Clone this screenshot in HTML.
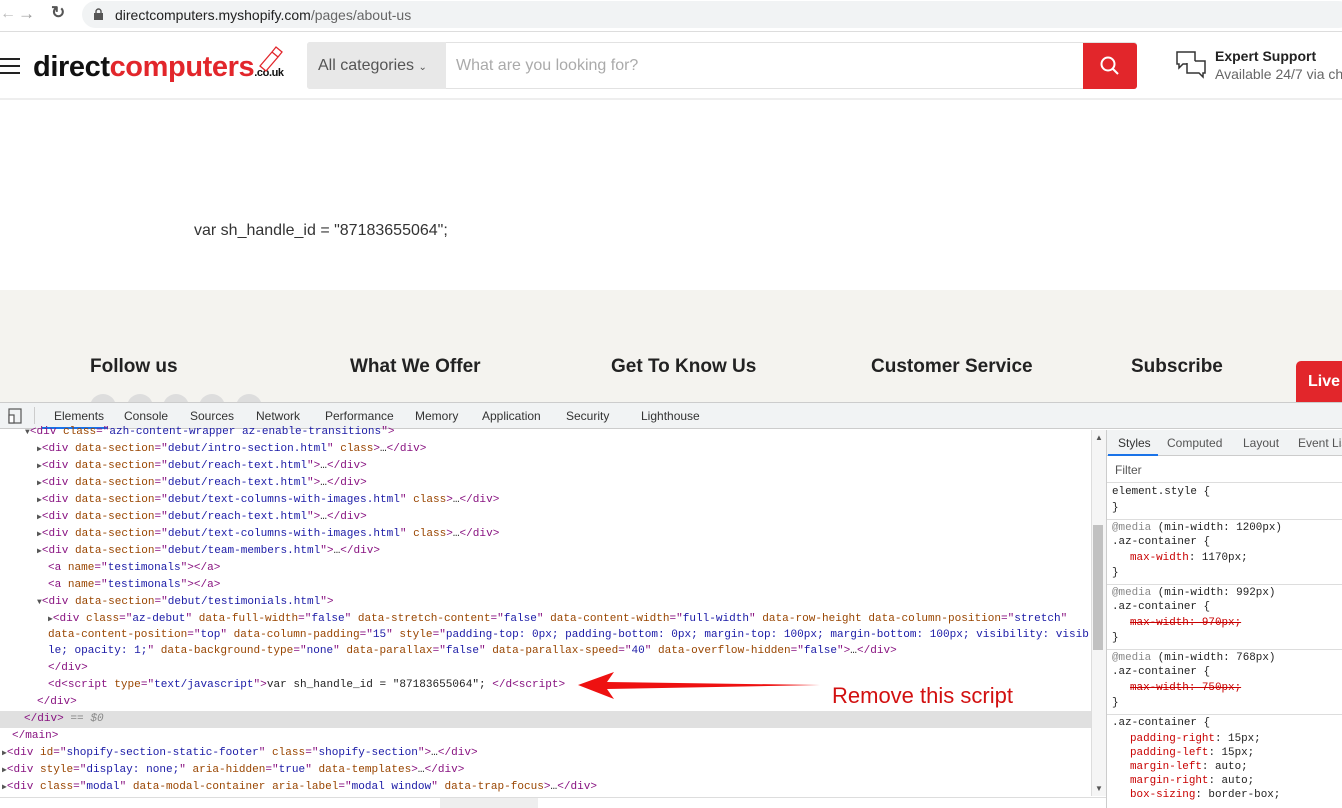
<!DOCTYPE html>
<html><head><meta charset="utf-8">
<style>
*{margin:0;padding:0;box-sizing:border-box}
body{width:1342px;height:808px;overflow:hidden;position:relative;background:#fff;font-family:"Liberation Sans",sans-serif}
.abs{position:absolute}
.code{position:absolute;font-family:"Liberation Mono","DejaVu Sans Mono",monospace;font-size:11.05px;white-space:pre;color:#222;line-height:14px}
.t{color:#881280}.a{color:#994500}.v{color:#1a1aa6}.g{color:#888}
.tri{color:#555;font-size:8px}
.tab{position:absolute;top:409px;font-size:12px;color:#333}
.st{position:absolute;font-family:"Liberation Mono",monospace;font-size:10.9px;white-space:pre;color:#222}
.p{color:#c80000}
.s{color:#c80000;text-decoration:line-through}
.m{color:#888}
.sep{position:absolute;left:1107px;width:235px;height:1px;background:#ddd}
.fh{position:absolute;top:356px;font-size:19px;font-weight:bold;color:#222}
.circ{position:absolute;top:394px;width:26px;height:26px;border-radius:50%;background:#ddd}
</style></head><body>

<div class="abs" style="left:0;top:0;width:1342px;height:30px;background:#fff"></div>
<div class="abs" style="left:82px;top:1px;width:1270px;height:27px;border-radius:14px;background:#f1f3f4"></div>
<div class="abs" style="left:0;top:5px;font-size:16px;color:#bbb">←</div>
<div class="abs" style="left:18px;top:4px;font-size:17px;color:#999">→</div>
<div class="abs" style="left:51px;top:3px;font-size:17px;color:#555;font-weight:bold">↻</div>
<svg class="abs" style="left:94px;top:8px" width="9" height="12"><rect x="0" y="5" width="9" height="7" fill="#555"/><path d="M2 5V3.5a2.5 2.5 0 0 1 5 0V5" stroke="#555" fill="none" stroke-width="1.4"/></svg>
<div class="abs" style="left:115px;top:7px;font-size:14px;color:#222">directcomputers.myshopify.com<span style="color:#666">/pages/about-us</span></div>
<div class="abs" style="left:0;top:31px;width:1342px;height:1px;background:#ddd"></div>

<svg class="abs" style="left:0;top:57px" width="22" height="18"><path d="M0 2h20M0 9h20M0 16h20" stroke="#222" stroke-width="2"/></svg>
<div class="abs" style="left:33px;top:51px;font-size:29px;font-weight:bold;letter-spacing:-0.4px;color:#111">direct<span style="color:#e2262b">computers</span><span style="font-size:11px;color:#111">.co.uk</span></div>
<svg class="abs" style="left:256px;top:44px" width="28" height="28"><path d="M4 22l12-14 6 5-12 14z M16 8l4-5 6 5-4 5" fill="none" stroke="#e2262b" stroke-width="1.3"/></svg>
<div class="abs" style="left:307px;top:42px;width:830px;height:47px;border-radius:3px;background:#fff;border:1px solid #e2e2e2"></div>
<div class="abs" style="left:307px;top:42px;width:139px;height:47px;background:#e8e8e8;border-radius:3px 0 0 3px"></div>
<div class="abs" style="left:318px;top:57px;font-size:16px;color:#555">All categories <span style="font-size:10px">⌄</span></div>
<div class="abs" style="left:456px;top:57px;font-size:16px;color:#aaa">What are you looking for?</div>
<div class="abs" style="left:1083px;top:43px;width:54px;height:46px;background:#e2262b;border-radius:0 3px 3px 0"></div>
<svg class="abs" style="left:1099px;top:55px" width="22" height="22"><circle cx="9" cy="9" r="6.5" stroke="#fff" stroke-width="2" fill="none"/><path d="M14 14l5 5" stroke="#fff" stroke-width="2"/></svg>
<svg class="abs" style="left:1175px;top:50px" width="32" height="30"><path d="M2 2h18v12H8l-4 4v-4H2z" fill="none" stroke="#333" stroke-width="1.5"/><path d="M12 13v10h12l4 4v-4h2V11h-10" fill="#fff" stroke="#333" stroke-width="1.5"/></svg>
<div class="abs" style="left:1215px;top:48px;font-size:14px;font-weight:bold;color:#222">Expert Support</div>
<div class="abs" style="left:1215px;top:66px;font-size:14px;color:#666;white-space:nowrap">Available 24/7 via chat</div>
<div class="abs" style="left:0;top:98px;width:1342px;height:2px;background:#eee"></div>

<div class="abs" style="left:194px;top:222px;font-size:16px;color:#333">var sh_handle_id = "87183655064";</div>

<div class="abs" style="left:0;top:290px;width:1342px;height:112px;background:#f4f3ef"></div>
<div class="fh" style="left:90px">Follow us</div>
<div class="fh" style="left:350px">What We Offer</div>
<div class="fh" style="left:611px">Get To Know Us</div>
<div class="fh" style="left:871px">Customer Service</div>
<div class="fh" style="left:1131px">Subscribe</div>
<div class="circ" style="left:90px"></div><div class="circ" style="left:127px"></div><div class="circ" style="left:163px"></div><div class="circ" style="left:199px"></div><div class="circ" style="left:236px"></div>
<div class="abs" style="left:1296px;top:361px;width:60px;height:41px;background:#e2262b;border-radius:5px 0 0 0;color:#fff;font-size:16px;font-weight:bold;padding:12px 0 0 12px">Live</div>

<div class="abs" style="left:0;top:402px;width:1342px;height:27px;background:#f1f3f4;border-top:1px solid #ccc;border-bottom:1px solid #ccc"></div>
<svg class="abs" style="left:7px;top:407px" width="18" height="18"><rect x="2" y="2" width="12" height="14" fill="none" stroke="#555" stroke-width="1.2"/><rect x="2" y="8" width="5" height="8" fill="#fff" stroke="#555" stroke-width="1.2"/></svg>
<div class="abs" style="left:34px;top:407px;width:1px;height:17px;background:#ccc"></div>
<div class="tab" style="left:54px">Elements</div>
<div class="abs" style="left:42px;top:427px;width:66px;height:2px;background:#1a73e8"></div>
<div class="tab" style="left:124px">Console</div>
<div class="tab" style="left:190px">Sources</div>
<div class="tab" style="left:256px">Network</div>
<div class="tab" style="left:325px">Performance</div>
<div class="tab" style="left:415px">Memory</div>
<div class="tab" style="left:482px">Application</div>
<div class="tab" style="left:566px">Security</div>
<div class="tab" style="left:641px">Lighthouse</div>

<div class="abs" style="left:0;top:711px;width:1091px;height:17px;background:#e0e0e0"></div>
<div class="abs" style="left:1091px;top:430px;width:15px;height:366px;background:#f5f5f5;border-left:1px solid #ddd"></div>
<div class="abs" style="left:1093px;top:525px;width:10px;height:125px;background:#c1c1c1"></div>
<div class="abs" style="left:1095px;top:433px;font-size:8px;color:#555">▲</div>
<div class="abs" style="left:1095px;top:784px;font-size:8px;color:#555">▼</div>
<div class="abs" style="left:0;top:797px;width:1107px;height:11px;background:#fff;border-top:1px solid #ddd"></div>
<div class="abs" style="left:440px;top:798px;width:98px;height:10px;background:#eee"></div>

<div class="code" style="left:25px;top:425px"><span class="tri">▼</span><span class="t">&lt;div </span><span class="a">class</span><span class="t">="</span><span class="v">azh-content-wrapper az-enable-transitions</span><span class="t">"&gt;</span></div>
<div class="code" style="left:37px;top:442px"><span class="tri">▶</span><span class="t">&lt;div </span><span class="a">data-section</span><span class="t">="</span><span class="v">debut/intro-section.html</span><span class="t">" </span><span class="a">class</span><span class="t">&gt;</span>…<span class="t">&lt;/div&gt;</span></div>
<div class="code" style="left:37px;top:459px"><span class="tri">▶</span><span class="t">&lt;div </span><span class="a">data-section</span><span class="t">="</span><span class="v">debut/reach-text.html</span><span class="t">"&gt;</span>…<span class="t">&lt;/div&gt;</span></div>
<div class="code" style="left:37px;top:476px"><span class="tri">▶</span><span class="t">&lt;div </span><span class="a">data-section</span><span class="t">="</span><span class="v">debut/reach-text.html</span><span class="t">"&gt;</span>…<span class="t">&lt;/div&gt;</span></div>
<div class="code" style="left:37px;top:493px"><span class="tri">▶</span><span class="t">&lt;div </span><span class="a">data-section</span><span class="t">="</span><span class="v">debut/text-columns-with-images.html</span><span class="t">" </span><span class="a">class</span><span class="t">&gt;</span>…<span class="t">&lt;/div&gt;</span></div>
<div class="code" style="left:37px;top:510px"><span class="tri">▶</span><span class="t">&lt;div </span><span class="a">data-section</span><span class="t">="</span><span class="v">debut/reach-text.html</span><span class="t">"&gt;</span>…<span class="t">&lt;/div&gt;</span></div>
<div class="code" style="left:37px;top:527px"><span class="tri">▶</span><span class="t">&lt;div </span><span class="a">data-section</span><span class="t">="</span><span class="v">debut/text-columns-with-images.html</span><span class="t">" </span><span class="a">class</span><span class="t">&gt;</span>…<span class="t">&lt;/div&gt;</span></div>
<div class="code" style="left:37px;top:544px"><span class="tri">▶</span><span class="t">&lt;div </span><span class="a">data-section</span><span class="t">="</span><span class="v">debut/team-members.html</span><span class="t">"&gt;</span>…<span class="t">&lt;/div&gt;</span></div>
<div class="code" style="left:48px;top:561px"><span class="t">&lt;a </span><span class="a">name</span><span class="t">="</span><span class="v">testimonals</span><span class="t">"&gt;&lt;/a&gt;</span></div>
<div class="code" style="left:48px;top:578px"><span class="t">&lt;a </span><span class="a">name</span><span class="t">="</span><span class="v">testimonals</span><span class="t">"&gt;&lt;/a&gt;</span></div>
<div class="code" style="left:37px;top:595px"><span class="tri">▼</span><span class="t">&lt;div </span><span class="a">data-section</span><span class="t">="</span><span class="v">debut/testimonials.html</span><span class="t">"&gt;</span></div>
<div class="code" style="left:48px;top:612px"><span class="tri">▶</span><span class="t">&lt;div </span><span class="a">class</span><span class="t">="</span><span class="v">az-debut</span><span class="t">" </span><span class="a">data-full-width</span><span class="t">="</span><span class="v">false</span><span class="t">" </span><span class="a">data-stretch-content</span><span class="t">="</span><span class="v">false</span><span class="t">" </span><span class="a">data-content-width</span><span class="t">="</span><span class="v">full-width</span><span class="t">" </span><span class="a">data-row-height</span> <span class="a">data-column-position</span><span class="t">="</span><span class="v">stretch</span><span class="t">"</span></div>
<div class="code" style="left:48px;top:628px"><span class="a">data-content-position</span><span class="t">="</span><span class="v">top</span><span class="t">" </span><span class="a">data-column-padding</span><span class="t">="</span><span class="v">15</span><span class="t">" </span><span class="a">style</span><span class="t">="</span><span class="v">padding-top: 0px; padding-bottom: 0px; margin-top: 100px; margin-bottom: 100px; visibility: visib</span></div>
<div class="code" style="left:48px;top:644px"><span class="v">le; opacity: 1;</span><span class="t">" </span><span class="a">data-background-type</span><span class="t">="</span><span class="v">none</span><span class="t">" </span><span class="a">data-parallax</span><span class="t">="</span><span class="v">false</span><span class="t">" </span><span class="a">data-parallax-speed</span><span class="t">="</span><span class="v">40</span><span class="t">" </span><span class="a">data-overflow-hidden</span><span class="t">="</span><span class="v">false</span><span class="t">"&gt;</span>…<span class="t">&lt;/div&gt;</span></div>
<div class="code" style="left:48px;top:661px"><span class="t">&lt;/div&gt;</span></div>
<div class="code" style="left:48px;top:678px"><span class="t">&lt;d&lt;script </span><span class="a">type</span><span class="t">="</span><span class="v">text/javascript</span><span class="t">"&gt;</span>var sh_handle_id = "87183655064"; <span class="t">&lt;/d&lt;script&gt;</span></div>
<div class="code" style="left:37px;top:695px"><span class="t">&lt;/div&gt;</span></div>
<div class="code" style="left:24px;top:712px"><span class="t">&lt;/div&gt;</span> <span class="g">== <i>$0</i></span></div>
<div class="code" style="left:12px;top:729px"><span class="t">&lt;/main&gt;</span></div>
<div class="code" style="left:2px;top:746px"><span class="tri">▶</span><span class="t">&lt;div </span><span class="a">id</span><span class="t">="</span><span class="v">shopify-section-static-footer</span><span class="t">" </span><span class="a">class</span><span class="t">="</span><span class="v">shopify-section</span><span class="t">"&gt;</span>…<span class="t">&lt;/div&gt;</span></div>
<div class="code" style="left:2px;top:763px"><span class="tri">▶</span><span class="t">&lt;div </span><span class="a">style</span><span class="t">="</span><span class="v">display: none;</span><span class="t">" </span><span class="a">aria-hidden</span><span class="t">="</span><span class="v">true</span><span class="t">" </span><span class="a">data-templates</span><span class="t">&gt;</span>…<span class="t">&lt;/div&gt;</span></div>
<div class="code" style="left:2px;top:780px"><span class="tri">▶</span><span class="t">&lt;div </span><span class="a">class</span><span class="t">="</span><span class="v">modal</span><span class="t">" </span><span class="a">data-modal-container</span> <span class="a">aria-label</span><span class="t">="</span><span class="v">modal window</span><span class="t">" </span><span class="a">data-trap-focus</span><span class="t">&gt;</span>…<span class="t">&lt;/div&gt;</span></div>

<svg class="abs" style="left:570px;top:668px" width="260" height="36"><path d="M8 17 L44 4 L37 14 L250 17 L37 21 L44 31 Z" fill="#ee1111"/></svg>
<div class="abs" style="left:832px;top:683px;font-size:22px;color:#d21010">Remove this script</div>

<div class="abs" style="left:1106px;top:430px;width:1px;height:378px;background:#ccc"></div>
<div class="abs" style="left:1107px;top:430px;width:235px;height:26px;background:#f1f3f4;border-bottom:1px solid #ccc"></div>
<div class="abs" style="left:1118px;top:436px;font-size:12px;color:#333">Styles</div>
<div class="abs" style="left:1167px;top:436px;font-size:12px;color:#555">Computed</div>
<div class="abs" style="left:1243px;top:436px;font-size:12px;color:#555">Layout</div>
<div class="abs" style="left:1298px;top:436px;font-size:12px;color:#555;white-space:nowrap">Event Listeners</div>
<div class="abs" style="left:1108px;top:454px;width:50px;height:2px;background:#1a73e8"></div>
<div class="abs" style="left:1115px;top:463px;font-size:12px;color:#555">Filter</div>
<div class="sep" style="top:482px"></div>
<div class="st" style="left:1112px;top:486px">element.style {</div>
<div class="st" style="left:1112px;top:502px">}</div>
<div class="sep" style="top:519px"></div>
<div class="st" style="left:1112px;top:522px"><span class="m">@media</span> (min-width: 1200px)</div>
<div class="st" style="left:1112px;top:536px">.az-container {</div>
<div class="st" style="left:1130px;top:552px"><span class="p">max-width</span>: 1170px;</div>
<div class="st" style="left:1112px;top:567px">}</div>
<div class="sep" style="top:584px"></div>
<div class="st" style="left:1112px;top:587px"><span class="m">@media</span> (min-width: 992px)</div>
<div class="st" style="left:1112px;top:601px">.az-container {</div>
<div class="st" style="left:1130px;top:617px"><span class="s">max-width: 970px;</span></div>
<div class="st" style="left:1112px;top:632px">}</div>
<div class="sep" style="top:649px"></div>
<div class="st" style="left:1112px;top:652px"><span class="m">@media</span> (min-width: 768px)</div>
<div class="st" style="left:1112px;top:666px">.az-container {</div>
<div class="st" style="left:1130px;top:682px"><span class="s">max-width: 750px;</span></div>
<div class="st" style="left:1112px;top:697px">}</div>
<div class="sep" style="top:714px"></div>
<div class="st" style="left:1112px;top:717px">.az-container {</div>
<div class="st" style="left:1130px;top:733px"><span class="p">padding-right</span>: 15px;</div>
<div class="st" style="left:1130px;top:747px"><span class="p">padding-left</span>: 15px;</div>
<div class="st" style="left:1130px;top:761px"><span class="p">margin-left</span>: auto;</div>
<div class="st" style="left:1130px;top:775px"><span class="p">margin-right</span>: auto;</div>
<div class="st" style="left:1130px;top:789px"><span class="p">box-sizing</span>: border-box;</div>
</body></html>
